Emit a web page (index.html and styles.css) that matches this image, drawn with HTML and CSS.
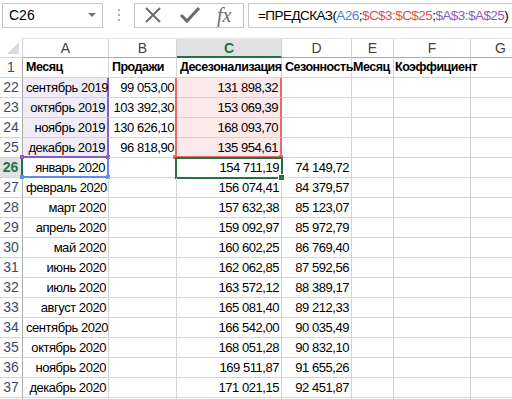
FILE: index.html
```html
<!DOCTYPE html>
<html lang="ru">
<head>
    <meta charset="UTF-8">
    <title>Прогноз</title>
    <link rel="stylesheet" href="styles.css">
</head>
<body>
    <div class="formula-bar">
        <div class="name-box">
            <span>C26</span>
            <span class="drop"></span>
        </div>
        <div class="grip"><i></i><i></i><i></i></div>
        <div class="fx-buttons">
            <svg width="20" height="20" viewBox="0 0 20 20"><path d="M3 3 L17 17 M17 3 L3 17" stroke="#6b6b6b" stroke-width="2" fill="none"/></svg>
            <svg width="22" height="20" viewBox="0 0 22 20"><path d="M2 10 L8 16 L20 3" stroke="#6b6b6b" stroke-width="3" fill="none"/></svg>
            <span class="fx">fx</span>
        </div>
        <div class="formula">=ПРЕДСКАЗ(<span class="r-blue">A26</span>;<span class="r-red">$C$3:$C$25</span>;<span class="r-purple">$A$3:$A$25</span>)</div>
    </div>

    <div class="sheet">
        <div class="corner"></div>
        <div class="ch">A</div>
        <div class="ch">B</div>
        <div class="ch active">C</div>
        <div class="ch">D</div>
        <div class="ch">E</div>
        <div class="ch">F</div>
        <div class="ch">G</div>

        <div class="rh">1</div>
        <div class="c b">Месяц</div>
        <div class="c b">Продажи</div>
        <div class="c b">Десезонализация</div>
        <div class="c b">Сезонность</div>
        <div class="c b tight">Месяц</div>
        <div class="c b tight">Коэффициент</div>
        <div class="c"></div>

        <div class="rh">22</div>
        <div class="c n ref-p">сентябрь 2019</div>
        <div class="c n">99 053,00</div>
        <div class="c n ref-r">131 898,32</div>
        <div class="c"></div><div class="c"></div><div class="c"></div><div class="c"></div>

        <div class="rh">23</div>
        <div class="c n ref-p">октябрь 2019</div>
        <div class="c n">103 392,30</div>
        <div class="c n ref-r">153 069,39</div>
        <div class="c"></div><div class="c"></div><div class="c"></div><div class="c"></div>

        <div class="rh">24</div>
        <div class="c n ref-p">ноябрь 2019</div>
        <div class="c n">130 626,10</div>
        <div class="c n ref-r">168 093,70</div>
        <div class="c"></div><div class="c"></div><div class="c"></div><div class="c"></div>

        <div class="rh">25</div>
        <div class="c n ref-p last">декабрь 2019</div>
        <div class="c n">96 818,90</div>
        <div class="c n ref-r last">135 954,61</div>
        <div class="c"></div><div class="c"></div><div class="c"></div><div class="c"></div>

        <div class="rh active">26</div>
        <div class="c n ref-b">январь 2020</div>
        <div class="c"></div>
        <div class="c n sel">154 711,19</div>
        <div class="c n">74 149,72</div>
        <div class="c"></div><div class="c"></div><div class="c"></div>

        <div class="rh">27</div>
        <div class="c n">февраль 2020</div><div class="c"></div>
        <div class="c n">156 074,41</div><div class="c n">84 379,57</div>
        <div class="c"></div><div class="c"></div><div class="c"></div>

        <div class="rh">28</div>
        <div class="c n">март 2020</div><div class="c"></div>
        <div class="c n">157 632,38</div><div class="c n">85 123,07</div>
        <div class="c"></div><div class="c"></div><div class="c"></div>

        <div class="rh">29</div>
        <div class="c n">апрель 2020</div><div class="c"></div>
        <div class="c n">159 092,97</div><div class="c n">85 972,79</div>
        <div class="c"></div><div class="c"></div><div class="c"></div>

        <div class="rh">30</div>
        <div class="c n">май 2020</div><div class="c"></div>
        <div class="c n">160 602,25</div><div class="c n">86 769,40</div>
        <div class="c"></div><div class="c"></div><div class="c"></div>

        <div class="rh">31</div>
        <div class="c n">июнь 2020</div><div class="c"></div>
        <div class="c n">162 062,85</div><div class="c n">87 592,56</div>
        <div class="c"></div><div class="c"></div><div class="c"></div>

        <div class="rh">32</div>
        <div class="c n">июль 2020</div><div class="c"></div>
        <div class="c n">163 572,12</div><div class="c n">88 389,17</div>
        <div class="c"></div><div class="c"></div><div class="c"></div>

        <div class="rh">33</div>
        <div class="c n">август 2020</div><div class="c"></div>
        <div class="c n">165 081,40</div><div class="c n">89 212,33</div>
        <div class="c"></div><div class="c"></div><div class="c"></div>

        <div class="rh">34</div>
        <div class="c n">сентябрь 2020</div><div class="c"></div>
        <div class="c n">166 542,00</div><div class="c n">90 035,49</div>
        <div class="c"></div><div class="c"></div><div class="c"></div>

        <div class="rh">35</div>
        <div class="c n">октябрь 2020</div><div class="c"></div>
        <div class="c n">168 051,28</div><div class="c n">90 832,10</div>
        <div class="c"></div><div class="c"></div><div class="c"></div>

        <div class="rh">36</div>
        <div class="c n">ноябрь 2020</div><div class="c"></div>
        <div class="c n">169 511,87</div><div class="c n">91 655,26</div>
        <div class="c"></div><div class="c"></div><div class="c"></div>

        <div class="rh">37</div>
        <div class="c n">декабрь 2020</div><div class="c"></div>
        <div class="c n">171 021,15</div><div class="c n">92 451,87</div>
        <div class="c"></div><div class="c"></div><div class="c"></div>

        <div class="rh"></div>
        <div class="c"></div><div class="c"></div><div class="c"></div><div class="c"></div>
        <div class="c"></div><div class="c"></div><div class="c"></div>
    </div>
</body>
</html>
```

FILE: styles.css
```css
body {
    margin: 0;
    background: #fff;
    font-family: "Liberation Sans", Arial, sans-serif;
    color: #000;
    overflow: hidden;
}

/* formula bar */
.formula-bar {
    display: flex;
    align-items: center;
    height: 38px;
    padding: 0 0 0 2px;
    box-sizing: border-box;
}
.formula-bar > div {
    flex-shrink: 0;
}
.name-box {
    display: flex;
    align-items: center;
    justify-content: space-between;
    width: 101px;
    height: 25px;
    margin-top: -8px;
    border: 1px solid #c6c6c6;
    box-sizing: border-box;
    padding: 0 6px 0 6px;
    font-size: 14px;
}
.drop {
    width: 0;
    height: 0;
    border-left: 4px solid transparent;
    border-right: 4px solid transparent;
    border-top: 4px solid #777;
}
.grip {
    display: flex;
    flex-direction: column;
    gap: 3px;
    margin: -8px 14px 0 15px;
}
.grip i {
    width: 2px;
    height: 2px;
    background: #b0b0b0;
}
.fx-buttons {
    display: flex;
    align-items: center;
    gap: 16px;
    width: 110px;
    height: 25px;
    margin-top: -8px;
    padding-left: 8px;
    border: 1px solid #c6c6c6;
    box-sizing: border-box;
}
.fx {
    font-family: "Liberation Serif", serif;
    font-style: italic;
    font-size: 20px;
    color: #6b6b6b;
    line-height: 20px;
}
.formula-bar > .formula {
    flex: 1;
    min-width: 0;
    height: 25px;
    margin: -8px 0 0 4px;
    border: 1px solid #c6c6c6;
    border-right: none;
    box-sizing: border-box;
    padding-left: 9px;
    font-size: 13.5px;
    line-height: 23px;
    white-space: nowrap;
    letter-spacing: -0.55px;
}
.r-blue { color: #4f7fd8; }
.r-red { color: #e0504f; }
.r-purple { color: #8a5ec0; }

/* sheet */
.sheet {
    display: grid;
    grid-template-columns: 23px 86px 68px 105px 70px 42px 77px 60px;
    grid-auto-rows: 20px;
    font-size: 13px;
    letter-spacing: -0.45px;
}
.sheet > div {
    box-sizing: border-box;
    border-right: 1px solid #d4d4d4;
    border-bottom: 1px solid #d4d4d4;
    line-height: 19px;
    white-space: nowrap;
    overflow: visible;
}
.corner {
    position: relative;
    background: #fff;
}
.corner::after {
    content: '';
    position: absolute;
    right: 3px;
    bottom: 3px;
    border-left: 12px solid transparent;
    border-bottom: 12px solid #dcdcdc;
}
.ch {
    text-align: center;
    color: #444;
    font-size: 14px;
    letter-spacing: 0;
    border-top: 1px solid #e4e4e4;
    border-bottom-color: #ababab !important;
}
.ch.active {
    background: #e1e1e1;
    color: #217346;
    font-weight: bold;
    border-bottom: 2px solid #217346 !important;
}
.rh {
    text-align: center;
    color: #3c4b64;
    font-size: 14px;
    letter-spacing: 0;
    border-right-color: #ababab !important;
}
.rh.active {
    background: #e1e1e1;
    color: #217346;
    font-weight: bold;
    border-right: 2px solid #217346 !important;
}
.c {
    padding: 0 3px;
    position: relative;
}
.b { font-weight: bold; font-size: 12.5px; letter-spacing: -0.5px; }
.b.tight { padding-left: 1px; }
.n { text-align: right; padding-right: 2px; }

/* formula reference ranges */
.ref-p {
    background: #efecf7;
    border-right: 2px solid #8a5ec0 !important;
}
.ref-p.last {
    border-bottom: 2px solid #8a5ec0 !important;
}
.ref-r {
    background: #fce9e9;
    box-shadow: -2px 0 0 #e86a6a;
    border-right: 2px solid #e86a6a !important;
}
.ref-r.last {
    border-bottom: 2px solid #e86a6a !important;
}
.ref-b {
    border-right: 2px solid #5b8ee6 !important;
    border-bottom: 2px solid #5b8ee6 !important;
}
.ref-p.last::before,
.ref-p.last::after,
.ref-r.last::before,
.ref-r.last::after,
.ref-b::before,
.ref-b::after {
    content: '';
    position: absolute;
    bottom: -3px;
    width: 4px;
    height: 4px;
}
.ref-p.last::before, .ref-b::before { left: -3px; }
.ref-r.last::before { left: -4px; }
.ref-p.last::after, .ref-r.last::after, .ref-b::after { right: -3px; }
.ref-p.last::before, .ref-p.last::after { background: #8a5ec0; }
.ref-r.last::before, .ref-r.last::after { background: #e86a6a; }
.ref-b::before, .ref-b::after { background: #5b8ee6; }

/* active cell */
.sel::after {
    content: '';
    position: absolute;
    left: -2px;
    top: -1px;
    right: -2px;
    bottom: -2px;
    border: 2px solid #217346;
}
.sel::before {
    content: '';
    position: absolute;
    right: -4px;
    bottom: -4px;
    width: 5px;
    height: 5px;
    background: #217346;
    border: 1px solid #fff;
    z-index: 2;
}
```
